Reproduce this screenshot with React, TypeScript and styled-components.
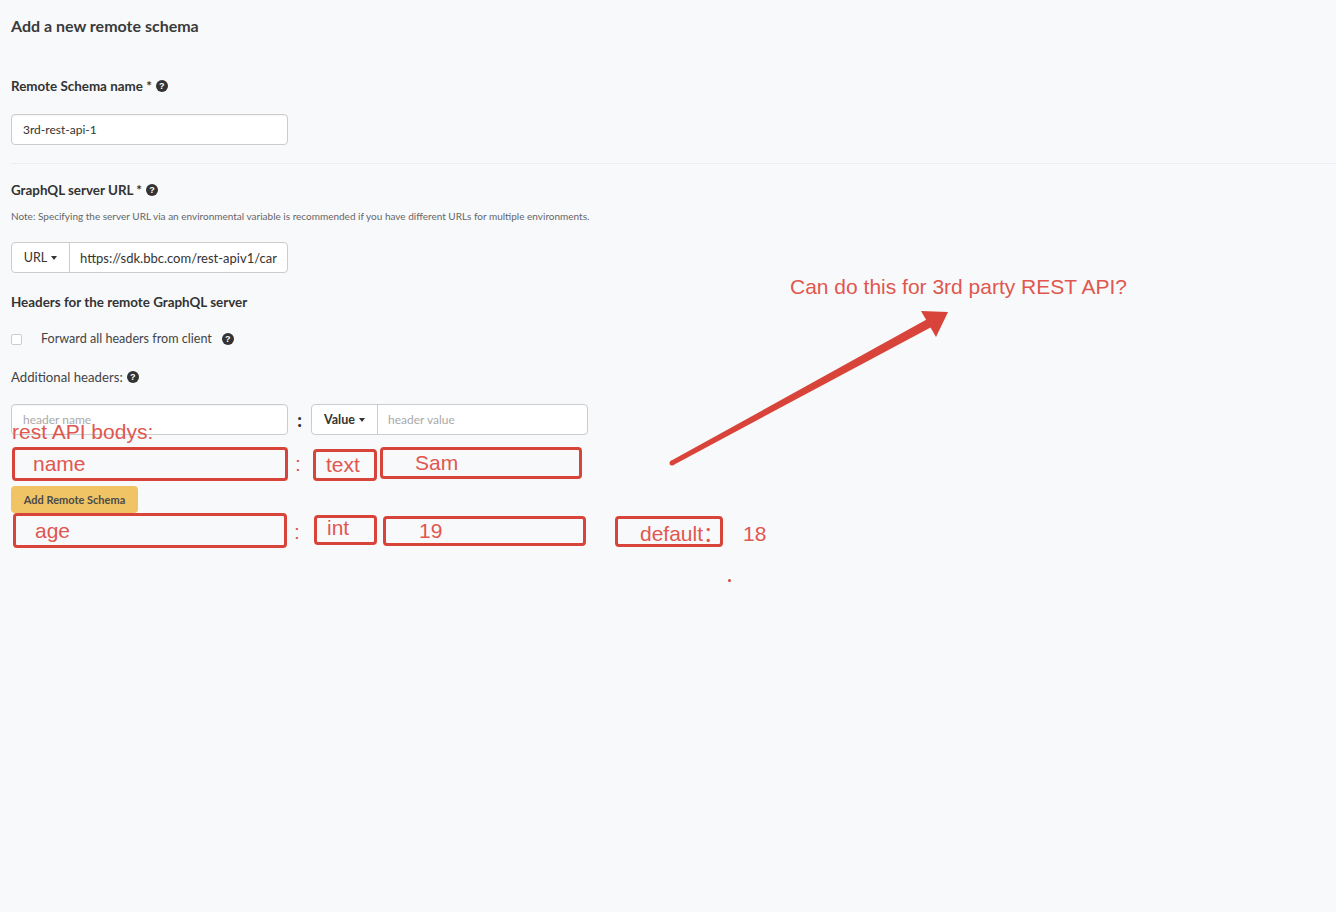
import React from 'react'
import styled, { createGlobalStyle } from 'styled-components'

const GlobalStyle = createGlobalStyle`
  html, body {
    margin: 0;
    padding: 0;
    background: #f8f9fb;
  }
  body {
    font-family: Lato, "Open Sans", sans-serif;
    color: #333;
  }
`

const RED = '#d9443a'
const RED_TEXT = '#e0574f'

const HelpIcon = () => <Help>?</Help>

const App: React.FC = () => {
  return (
    <Page>
      <GlobalStyle />
      <Title>Add a new remote schema</Title>

      <Label $top={41}>Remote Schema name * <HelpIcon /></Label>
      <TextInput $top={19} defaultValue="3rd-rest-api-1" />

      <Divider />

      <Label $top={17}>GraphQL server URL * <HelpIcon /></Label>
      <Note>Note: Specifying the server URL via an environmental variable is recommended if you have different URLs for multiple environments.</Note>
      <Group $top={19}>
        <Addon $w={57}>URL <Caret /></Addon>
        <GroupInput $size={13} defaultValue="https://sdk.bbc.com/rest-apiv1/cars" />
      </Group>

      <Label $top={20}>Headers for the remote GraphQL server</Label>
      <CheckRow>
        <Checkbox />
        <span>Forward all headers from client</span>
        <HelpIcon />
      </CheckRow>
      <Plain>Additional headers: <HelpIcon /></Plain>

      <HeaderRow>
        <TextInput $top={0} placeholder="header name" />
        <BoldColon>:</BoldColon>
        <Group $top={0}>
          <Addon $w={65} $bold>Value <Caret /></Addon>
          <GroupInput $size={12} placeholder="header value" />
        </Group>
      </HeaderRow>

      <SubmitButton>Add Remote Schema</SubmitButton>

      <Annotations>
        <Note2 style={{ left: 12, top: 420 }}>rest API bodys:</Note2>

        <Box $l={12} $t={447} $w={276} $h={34} $pad={19}>name</Box>
        <Note2 style={{ left: 295, top: 452 }}>:</Note2>
        <Box $l={313} $t={449} $w={64} $h={32} $pad={11}>text</Box>
        <Box $l={380} $t={447} $w={202} $h={32} $pad={33}>Sam</Box>

        <Box $l={13} $t={513} $w={274} $h={35} $pad={20}>age</Box>
        <Note2 style={{ left: 294, top: 520 }}>:</Note2>
        <Box $l={314} $t={515} $w={63} $h={30} $pad={11} $lift={4}>int</Box>
        <Box $l={383} $t={516} $w={203} $h={30} $pad={34}>19</Box>
        <Box $l={615} $t={516} $w={108} $h={31} $pad={23}>default：</Box>
        <Note2 style={{ left: 743, top: 522 }}>18</Note2>
        <Dot />

        <Note2 style={{ left: 790, top: 275 }}>Can do this for 3rd party REST API?</Note2>

        <ArrowSvg width="1336" height="912" viewBox="0 0 1336 912">
          <polygon
            points="673,465.2 671,460.8 932.9,316 937.1,324"
            fill={RED}
          />
          <circle cx="672" cy="463" r="2.5" fill={RED} />
          <polygon points="948,312 921,311 936,337" fill={RED} />
        </ArrowSvg>
      </Annotations>
    </Page>
  )
}

export default App

const Page = styled.div`
  position: relative;
  min-height: 912px;
  box-sizing: border-box;
  padding: 16px 0 0 11px;
  display: flex;
  flex-direction: column;
  align-items: flex-start;
`

const Title = styled.h2`
  margin: 0;
  font-size: 16px;
  line-height: 20px;
  font-weight: 700;
  color: #3a3a3a;
`

const Label = styled.div<{ $top: number }>`
  margin-top: ${p => p.$top}px;
  font-size: 13.4px;
  line-height: 18px;
  font-weight: 700;
  color: #333;
  display: flex;
  align-items: center;
  gap: 4px;
`

const Plain = styled.div`
  margin-top: 20px;
  font-size: 13.2px;
  line-height: 18px;
  color: #444;
  display: flex;
  align-items: center;
  gap: 4px;
`

const Help = styled.span`
  display: inline-flex;
  align-items: center;
  justify-content: center;
  width: 12px;
  height: 12px;
  border-radius: 50%;
  background: #333;
  color: #fff;
  font-size: 9px;
  font-weight: 700;
  line-height: 1;
  font-family: "Liberation Sans", Arial, sans-serif;
`

const TextInput = styled.input<{ $top: number }>`
  margin-top: ${p => p.$top}px;
  box-sizing: border-box;
  width: 277px;
  height: 31px;
  padding: 0 11px;
  border: 1px solid #ccc;
  border-radius: 4px;
  background: #fff;
  font-family: Lato, sans-serif;
  font-size: 12px;
  color: #333;
  outline: none;
  box-shadow: inset 0 1px 1px rgba(0, 0, 0, 0.04);
  &::placeholder {
    color: #aaa;
  }
`

const Divider = styled.div`
  margin-top: 18px;
  align-self: stretch;
  height: 1px;
  background: #eceef1;
`

const Note = styled.div`
  margin-top: 10px;
  font-size: 10px;
  line-height: 14px;
  color: #666;
`

const Group = styled.div<{ $top: number }>`
  margin-top: ${p => p.$top}px;
  box-sizing: border-box;
  width: 277px;
  height: 31px;
  display: flex;
  border: 1px solid #ccc;
  border-radius: 4px;
  background: #fff;
  overflow: hidden;
`

const Addon = styled.div<{ $w: number; $bold?: boolean }>`
  flex: 0 0 ${p => p.$w}px;
  display: flex;
  align-items: center;
  justify-content: center;
  gap: 4px;
  border-right: 1px solid #ccc;
  font-size: 12.5px;
  font-weight: ${p => (p.$bold ? 700 : 400)};
  color: #333;
`

const Caret = styled.span`
  width: 0;
  height: 0;
  border-left: 3.5px solid transparent;
  border-right: 3.5px solid transparent;
  border-top: 4px solid #333;
`

const GroupInput = styled.input<{ $size: number }>`
  flex: 1;
  min-width: 0;
  border: none;
  padding: 0 10px;
  font-family: Lato, sans-serif;
  font-size: ${p => p.$size}px;
  color: #333;
  outline: none;
  background: transparent;
  &::placeholder {
    color: #aaa;
  }
`

const CheckRow = styled.div`
  margin-top: 19px;
  display: flex;
  align-items: center;
  font-size: 12.6px;
  line-height: 18px;
  color: #444;
  gap: 10px;
`

const Checkbox = styled.span`
  width: 11px;
  height: 11px;
  box-sizing: border-box;
  border: 1px solid #ccc;
  border-radius: 2px;
  background: #fff;
  margin-right: 9px;
`

const HeaderRow = styled.div`
  margin-top: 18px;
  display: flex;
  align-items: center;
`

const BoldColon = styled.span`
  width: 23px;
  text-align: center;
  font-size: 18px;
  font-weight: 900;
  color: #333;
`

const SubmitButton = styled.button`
  margin-top: 51px;
  height: 27px;
  width: 127px;
  border: none;
  border-radius: 4px;
  background: #f0c465;
  color: #4a4a4a;
  font-family: Lato, sans-serif;
  font-weight: 700;
  font-size: 11px;
  padding: 0;
`

const Annotations = styled.div`
  position: absolute;
  inset: 0;
  pointer-events: none;
  font-family: "Liberation Sans", Arial, "Noto Sans CJK SC", sans-serif;
`

const Note2 = styled.div`
  position: absolute;
  font-size: 21px;
  line-height: 24px;
  color: ${RED_TEXT};
  white-space: nowrap;
`

const Box = styled.div<{ $l: number; $t: number; $w: number; $h: number; $pad: number; $lift?: number }>`
  position: absolute;
  left: ${p => p.$l}px;
  top: ${p => p.$t}px;
  width: ${p => p.$w}px;
  height: ${p => p.$h}px;
  box-sizing: border-box;
  border: 3px solid ${RED};
  border-radius: 4px;
  display: flex;
  align-items: center;
  padding-left: ${p => p.$pad - 1}px;
  padding-bottom: ${p => p.$lift ?? 0}px;
  font-size: 21px;
  color: ${RED_TEXT};
  white-space: nowrap;
`

const Dot = styled.span`
  position: absolute;
  left: 728px;
  top: 579px;
  width: 3px;
  height: 3px;
  border-radius: 50%;
  background: ${RED};
`

const ArrowSvg = styled.svg`
  position: absolute;
  left: 0;
  top: 0;
`
